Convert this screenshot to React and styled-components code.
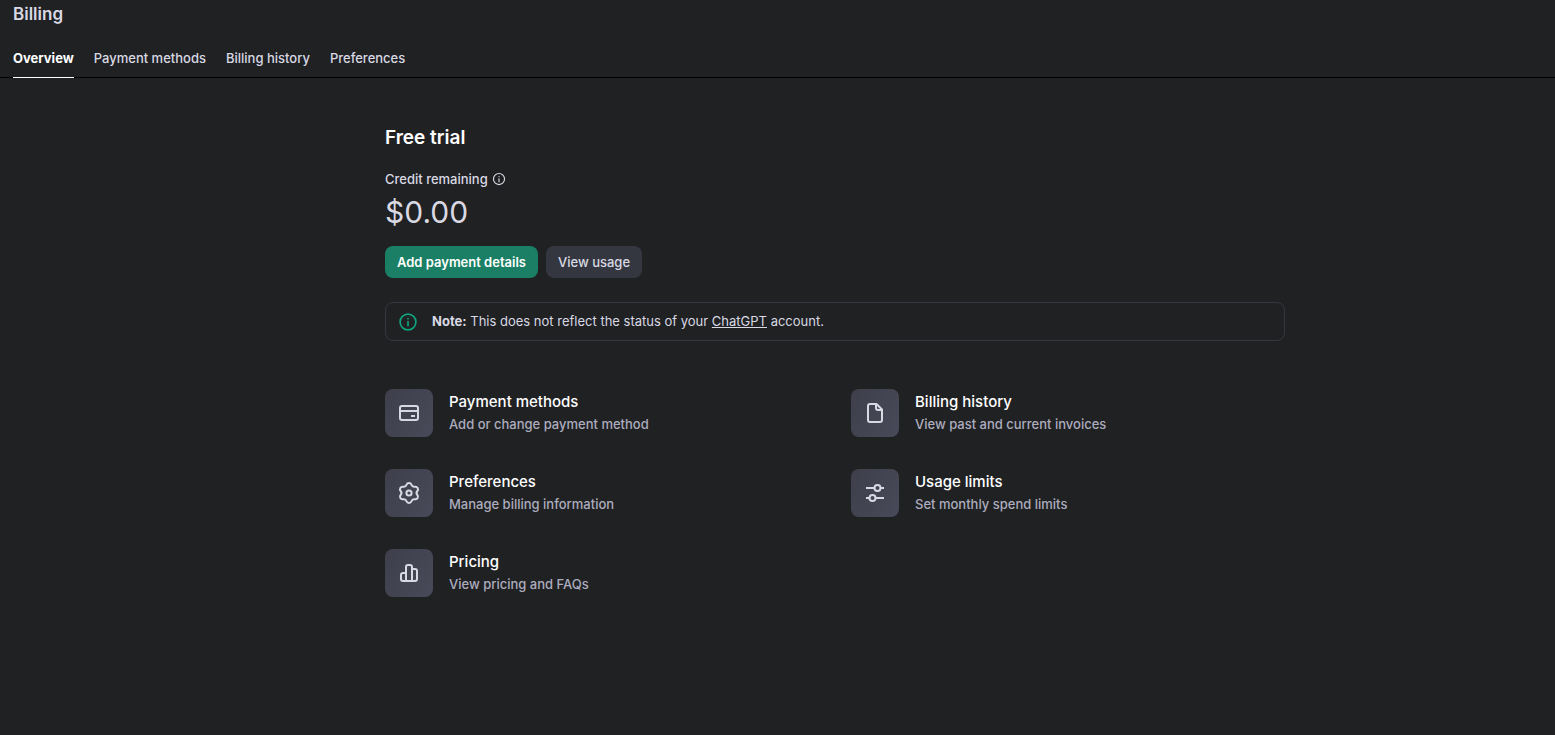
import styled, { createGlobalStyle } from 'styled-components'

const tabs = ['Overview', 'Payment methods', 'Billing history', 'Preferences']

const InfoIcon = ({ size }) => (
  <svg
    width={size}
    height={size}
    viewBox="0 0 24 24"
    fill="none"
    stroke="currentColor"
    strokeWidth="2"
    strokeLinecap="round"
    aria-hidden="true"
  >
    <circle cx="12" cy="12" r="9.5" />
    <path d="M12 16.5v-5M12 7.8v.2" />
  </svg>
)

const LineIcon = ({ children }) => (
  <svg
    width="24"
    height="24"
    viewBox="0 0 24 24"
    fill="none"
    stroke="currentColor"
    strokeWidth="2"
    strokeLinejoin="round"
    aria-hidden="true"
  >
    {children}
  </svg>
)

const CardIcon = () => (
  <LineIcon>
    <rect x="3" y="5" width="18" height="14" rx="2" />
    <path d="M3 10h18M14 15h4" />
  </LineIcon>
)

const FileIcon = () => (
  <LineIcon>
    <path d="M13.5 3H7a2 2 0 0 0-2 2v14a2 2 0 0 0 2 2h10a2 2 0 0 0 2-2V8.5z" />
    <path d="M13 3v4a2 2 0 0 0 2 2h4" />
  </LineIcon>
)

const GearIcon = () => (
  <LineIcon>
    <path d="M9.54 3.77A2.6 2.6 0 0 1 14.46 3.77A3 3 0 0 0 17.9 5.75A2.6 2.6 0 0 1 20.36 10.02A3 3 0 0 0 20.36 13.98A2.6 2.6 0 0 1 17.9 18.25A3 3 0 0 0 14.46 20.23A2.6 2.6 0 0 1 9.54 20.23A3 3 0 0 0 6.1 18.25A2.6 2.6 0 0 1 3.64 13.98A3 3 0 0 0 3.64 10.02A2.6 2.6 0 0 1 6.1 5.75A3 3 0 0 0 9.54 3.77z" />
    <circle cx="12" cy="12" r="2.6" />
  </LineIcon>
)

const SlidersIcon = () => (
  <LineIcon>
    <path d="M3 7h8M18 7h3M3 17h3M13 17h8" />
    <circle cx="14.5" cy="7" r="3" />
    <circle cx="9.5" cy="17" r="3" />
  </LineIcon>
)

const ChartIcon = () => (
  <LineIcon>
    <path d="M9 20V6a2 2 0 0 1 2-2h2a2 2 0 0 1 2 2v14" />
    <path d="M9 12H6a2 2 0 0 0-2 2v4a2 2 0 0 0 2 2h12a2 2 0 0 0 2-2v-8a2 2 0 0 0-2-2h-3" />
  </LineIcon>
)

const links = [
  {
    title: 'Payment methods',
    text: 'Add or change payment method',
    Icon: CardIcon,
  },
  {
    title: 'Billing history',
    text: 'View past and current invoices',
    Icon: FileIcon,
  },
  {
    title: 'Preferences',
    text: 'Manage billing information',
    Icon: GearIcon,
  },
  {
    title: 'Usage limits',
    text: 'Set monthly spend limits',
    Icon: SlidersIcon,
  },
  { title: 'Pricing', text: 'View pricing and FAQs', Icon: ChartIcon },
]

const App = () => {
  return (
    <>
      <GlobalStyle />
      <Header>
        <PageTitle>Billing</PageTitle>
        <Tabs>
          {tabs.map((tab, index) => (
            <Tab href="#" key={tab} $active={index === 0}>
              {tab}
            </Tab>
          ))}
        </Tabs>
      </Header>

      <Main>
        <Content>
          <PlanTitle>Free trial</PlanTitle>
          <CreditLabel>
            Credit remaining
            <InfoIcon size={14} />
          </CreditLabel>
          <CreditAmount>$0.00</CreditAmount>

          <ButtonRow>
            <Button type="button" $primary>
              Add payment details
            </Button>
            <Button type="button">View usage</Button>
          </ButtonRow>

          <Note>
            <InfoIcon size={20} />
            <p>
              <strong>Note:</strong> This does not reflect the status of your{' '}
              <a href="#">ChatGPT</a> account.
            </p>
          </Note>

          <LinkGrid>
            {links.map(({ title, text, Icon }) => (
              <LinkCard href="#" key={title}>
                <IconTile>
                  <Icon />
                </IconTile>
                <div>
                  <LinkTitle>{title}</LinkTitle>
                  <LinkText>{text}</LinkText>
                </div>
              </LinkCard>
            ))}
          </LinkGrid>
        </Content>
      </Main>
    </>
  )
}

export default App

const GlobalStyle = createGlobalStyle`
  * {
    box-sizing: border-box;
    margin: 0;
  }

  body {
    background-color: #202123;
    color: #d9d9e3;
    font-family: Inter, 'Liberation Sans', sans-serif;
    font-size: 13px;
    line-height: 20px;
  }

  a {
    color: inherit;
  }
`

const Header = styled.header`
  padding: 0 13px;
  border-bottom: 1px solid #000;
`

const PageTitle = styled.h1`
  font-size: 17px;
  font-weight: 600;
  line-height: 28px;
`

const Tabs = styled.nav`
  display: flex;
  gap: 20px;
  margin-top: 20px;
`

const Tab = styled.a`
  padding-bottom: 9px;
  margin-bottom: -1px;
  border-bottom: 1px solid ${({ $active }) => ($active ? '#fff' : 'transparent')};
  color: ${({ $active }) => ($active ? '#fff' : '#d9d9e3')};
  font-weight: ${({ $active }) => ($active ? 700 : 500)};
  text-decoration: none;
`

const Main = styled.main`
  padding: 46px 0 48px 115px;
`

const Content = styled.div`
  max-width: 900px;
  margin: 0 auto;
`

const PlanTitle = styled.h2`
  color: #fff;
  font-size: 19px;
  font-weight: 600;
  line-height: 28px;
`

const CreditLabel = styled.div`
  display: flex;
  align-items: center;
  gap: 4px;
  margin-top: 17px;
  font-weight: 500;
`

const CreditAmount = styled.div`
  margin-top: 3px;
  font-size: 30px;
  line-height: 40px;
`

const ButtonRow = styled.div`
  display: flex;
  gap: 8px;
  margin-top: 14px;
`

const Button = styled.button`
  height: 32px;
  padding: 0 12px;
  border: none;
  border-radius: 8px;
  background-color: ${({ $primary }) => ($primary ? '#1a7f64' : '#353740')};
  color: ${({ $primary }) => ($primary ? '#fff' : '#d9d9e3')};
  font: inherit;
  font-weight: ${({ $primary }) => ($primary ? 600 : 500)};
  cursor: pointer;
`

const Note = styled.div`
  display: flex;
  align-items: center;
  gap: 14px;
  margin-top: 24px;
  padding: 8px 12px;
  border: 1px solid #353740;
  border-radius: 8px;
  line-height: 21px;

  svg {
    color: #10a37f;
  }
`

const LinkGrid = styled.div`
  display: grid;
  grid-template-columns: 1fr 1fr;
  gap: 32px;
  margin-top: 48px;
`

const LinkCard = styled.a`
  display: flex;
  gap: 16px;
  text-decoration: none;
`

const IconTile = styled.div`
  display: flex;
  align-items: center;
  justify-content: center;
  width: 48px;
  height: 48px;
  border-radius: 8px;
  background: linear-gradient(120deg, #3e3f4b, #494a59);
`

const LinkTitle = styled.div`
  color: #fff;
  font-size: 15px;
  font-weight: 500;
  line-height: 26px;
`

const LinkText = styled.div`
  color: #acacbe;
  font-weight: 500;
  line-height: 18px;
`
